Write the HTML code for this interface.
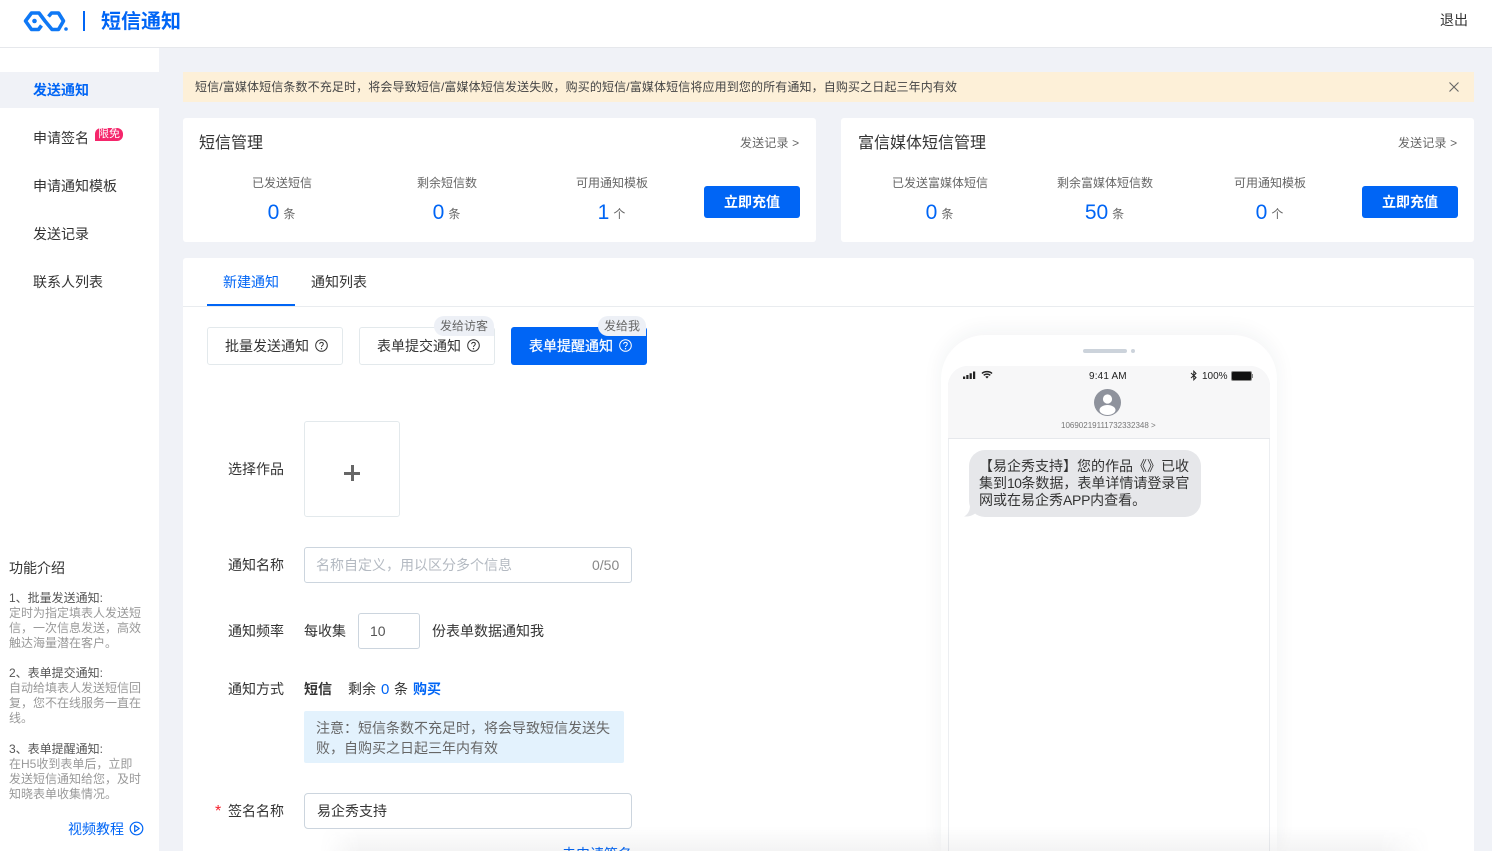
<!DOCTYPE html>
<html lang="zh"><head><meta charset="utf-8"><title>短信通知</title>
<style>
html,body{margin:0;padding:0;width:1492px;height:851px;overflow:hidden}
#w{position:relative;width:1492px;height:851px;overflow:hidden;background:#f0f2f7;font-family:"Liberation Sans","Noto Sans CJK SC",sans-serif;color:#333}
.a{position:absolute;white-space:nowrap;line-height:1.2}
.card{position:absolute;background:#fff;border-radius:3px}
.f{font-size:14px;color:#333}
.b{color:#0065f5}
.lab{color:#666;font-size:12px;transform:translateX(-50%)}
.num{transform:translateX(-50%);color:#666;font-size:12px;line-height:24px}
.num b{font-weight:400;font-size:21px;color:#0065f5;margin-right:4px;vertical-align:-1px}
.btn{position:absolute;background:#0065f5;color:#fff;border-radius:3px;text-align:center;font-weight:700}
.o{position:absolute;box-sizing:border-box;border:1px solid #e3e9ec;border-radius:3px;background:#fff}
.tag{position:absolute;background:#edf0f6;color:#666;font-size:12px;line-height:20px;height:20px;border-radius:10px 10px 0 10px;text-align:center}
.s{font-size:12px;line-height:14.7px;width:136px;white-space:normal;left:9px;color:#999}
.s i{font-style:normal;color:#555;display:block;margin-bottom:.6px}
</style></head><body><div id="w">
<div style="position:absolute;left:0;top:0;width:1492px;height:47px;background:#fff;border-bottom:1px solid #e6e8ec"></div>
<svg style="position:absolute;left:23px;top:10px" width="46" height="22" viewBox="0 0 46 22"><path d="M25.500 6.500L28.500 3H35.500L40.500 11L35.500 19.500H29L22 11L16 3H8.500L2.500 11L8.500 19.500H15.500L18.500 15.500" fill="none" stroke="#0f78f5" stroke-width="3.600" stroke-linejoin="round"/><circle cx="11.500" cy="11" r="2.300" fill="#0f78f5"/><circle cx="43" cy="19" r="1.800" fill="#0f78f5"/></svg>
<div style="position:absolute;left:83px;top:11px;width:2px;height:20px;background:#0065f5"></div>
<div class="a b" style="left:101px;top:11px;font-size:20px;font-weight:700;line-height:23px">短信通知</div>
<div class="a" style="left:1440px;top:12px;font-size:14px;line-height:17px">退出</div>

<div style="position:absolute;left:0;top:48px;width:159px;height:803px;background:#fff"></div>
<div style="position:absolute;left:0;top:72px;width:159px;height:36px;background:#f0f2f7"></div>
<div class="a b" style="left:33px;top:82px;font-size:14px;font-weight:700;line-height:17px">发送通知</div>
<div class="a" style="left:33px;top:130px;font-size:14px;line-height:17px">申请签名</div>
<div class="a" style="left:95px;top:128px;width:28px;height:13px;background:#f5266b;color:#fff;font-size:11px;line-height:13px;text-align:center;border-radius:6px 6px 6px 0">限免</div>
<div class="a" style="left:33px;top:178px;font-size:14px;line-height:17px">申请通知模板</div>
<div class="a" style="left:33px;top:226px;font-size:14px;line-height:17px">发送记录</div>
<div class="a" style="left:33px;top:274px;font-size:14px;line-height:17px">联系人列表</div>

<div class="a" style="left:9px;top:560px;font-size:14px;line-height:17px">功能介绍</div>
<div class="a s" style="top:591px"><i>1、批量发送通知:</i>定时为指定填表人发送短信，一次信息发送，高效触达海量潜在客户。</div>
<div class="a s" style="top:666px"><i>2、表单提交通知:</i>自动给填表人发送短信回复，您不在线服务一直在线。</div>
<div class="a s" style="top:742px"><i>3、表单提醒通知:</i>在H5收到表单后，立即<br>发送短信通知给您，及时<br>知晓表单收集情况。</div>
<div class="a b" style="left:68px;top:821px;font-size:14px;line-height:17px">视频教程</div>
<svg style="position:absolute;left:129px;top:821px" width="15" height="15" viewBox="0 0 15 15"><circle cx="7.500" cy="7.500" r="6.300" fill="none" stroke="#0065f5" stroke-width="1.200"/><path d="M5.700 4.400L10.200 7.500L5.700 10.600Z" fill="none" stroke="#0065f5" stroke-width="1.200" stroke-linejoin="round"/></svg>

<div style="position:absolute;left:183px;top:72px;width:1291px;height:30px;background:#fdf0d8"></div>
<div class="a" style="left:195px;top:80px;font-size:12px;line-height:15px;color:#444;letter-spacing:.125px">短信/富媒体短信条数不充足时，将会导致短信/富媒体短信发送失败，购买的短信/富媒体短信将应用到您的所有通知，自购买之日起三年内有效</div>
<svg style="position:absolute;left:1449px;top:82px" width="10" height="10" viewBox="0 0 10 10"><path d="M.5.500L9.500 9.500M9.500.500L.5 9.500" stroke="#666" stroke-width="1.100"/></svg>

<div class="card" style="left:183px;top:118px;width:633px;height:124px"></div>
<div class="a" style="left:199px;top:134px;font-size:16px;line-height:19px">短信管理</div>
<div class="a" style="left:740px;top:136px;font-size:12px;line-height:15px;color:#666;letter-spacing:.15px">发送记录 &gt;</div>
<div class="a lab" style="left:282px;top:176px">已发送短信</div>
<div class="a lab" style="left:447px;top:176px">剩余短信数</div>
<div class="a lab" style="left:612px;top:176px">可用通知模板</div>
<div class="a num" style="left:281.500px;top:201px"><b>0</b>条</div>
<div class="a num" style="left:446.500px;top:201px"><b>0</b>条</div>
<div class="a num" style="left:611.500px;top:201px"><b>1</b>个</div>
<div class="btn" style="left:704px;top:186px;width:96px;height:32px;line-height:32px;font-size:14px">立即充值</div>

<div class="card" style="left:841px;top:118px;width:633px;height:124px"></div>
<div class="a" style="left:858px;top:134px;font-size:16px;line-height:19px">富信媒体短信管理</div>
<div class="a" style="left:1398px;top:136px;font-size:12px;line-height:15px;color:#666;letter-spacing:.15px">发送记录 &gt;</div>
<div class="a lab" style="left:940px;top:176px">已发送富媒体短信</div>
<div class="a lab" style="left:1105px;top:176px">剩余富媒体短信数</div>
<div class="a lab" style="left:1270px;top:176px">可用通知模板</div>
<div class="a num" style="left:939.500px;top:201px"><b>0</b>条</div>
<div class="a num" style="left:1104.500px;top:201px"><b>50</b>条</div>
<div class="a num" style="left:1269.500px;top:201px"><b>0</b>个</div>
<div class="btn" style="left:1362px;top:186px;width:96px;height:32px;line-height:32px;font-size:14px">立即充值</div>

<div class="card" style="left:183px;top:258px;width:1291px;height:593px;border-radius:3px 3px 0 0"></div>
<div style="position:absolute;left:183px;top:306px;width:1291px;height:1px;background:#e9ecef"></div>
<div style="position:absolute;left:207px;top:304px;width:88px;height:2px;background:#0065f5"></div>
<div class="a b" style="left:223px;top:274px;font-size:14px;line-height:17px">新建通知</div>
<div class="a" style="left:311px;top:274px;font-size:14px;line-height:17px">通知列表</div>

<div class="o" style="left:207px;top:327px;width:136px;height:38px"></div>
<div class="a" style="left:225px;top:338px;font-size:14px;line-height:17px">批量发送通知</div>
<svg style="position:absolute;left:315px;top:339px" width="13" height="13" viewBox="0 0 13 13"><circle cx="6.500" cy="6.500" r="5.800" fill="none" stroke="#333"/><path d="M4.700 5.100C4.700 2.800 8.300 2.900 8.300 5C8.300 6.400 6.500 6.300 6.500 8" fill="none" stroke="#333"/><circle cx="6.500" cy="9.700" r=".7" fill="#333"/></svg>
<div class="o" style="left:359px;top:327px;width:136px;height:38px"></div>
<div class="a" style="left:377px;top:338px;font-size:14px;line-height:17px">表单提交通知</div>
<svg style="position:absolute;left:467px;top:339px" width="13" height="13" viewBox="0 0 13 13"><circle cx="6.500" cy="6.500" r="5.800" fill="none" stroke="#333"/><path d="M4.700 5.100C4.700 2.800 8.300 2.900 8.300 5C8.300 6.400 6.500 6.300 6.500 8" fill="none" stroke="#333"/><circle cx="6.500" cy="9.700" r=".7" fill="#333"/></svg>
<div class="tag" style="left:434px;top:316px;width:60px">发给访客</div>
<div style="position:absolute;left:511px;top:327px;width:136px;height:38px;background:#0065f5;border-radius:3px"></div>
<div class="a" style="left:529px;top:338px;font-size:14px;line-height:17px;color:#fff;-webkit-text-stroke:.25px #fff">表单提醒通知</div>
<svg style="position:absolute;left:619px;top:339px" width="13" height="13" viewBox="0 0 13 13"><circle cx="6.500" cy="6.500" r="5.800" fill="none" stroke="#fff"/><path d="M4.700 5.100C4.700 2.800 8.300 2.900 8.300 5C8.300 6.400 6.500 6.300 6.500 8" fill="none" stroke="#fff"/><circle cx="6.500" cy="9.700" r=".7" fill="#fff"/></svg>
<div class="tag" style="left:598px;top:316px;width:48px">发给我</div>

<div class="a f" style="left:228px;top:461px;line-height:17px">选择作品</div>
<div class="o" style="left:304px;top:421px;width:96px;height:96px"></div>
<div style="position:absolute;left:344px;top:472px;width:16px;height:3px;background:#666"></div>
<div style="position:absolute;left:350.500px;top:465px;width:3px;height:16px;background:#666"></div>

<div class="a f" style="left:228px;top:557px;line-height:17px">通知名称</div>
<div class="o" style="left:304px;top:547px;width:328px;height:36px;border-color:#ccd5de"></div>
<div class="a" style="left:316px;top:557px;font-size:14px;line-height:17px;color:#b4bac2">名称自定义，用以区分多个信息</div>
<div class="a" style="left:592px;top:558px;font-size:14px;line-height:15px;color:#888">0/50</div>

<div class="a f" style="left:228px;top:623px;line-height:17px">通知频率</div>
<div class="a f" style="left:304px;top:623px;line-height:17px">每收集</div>
<div class="o" style="left:358px;top:613px;width:62px;height:36px;border-color:#ccd5de"></div>
<div class="a" style="left:370px;top:624px;font-size:14px;line-height:15px;color:#555">10</div>
<div class="a f" style="left:432px;top:623px;line-height:17px">份表单数据通知我</div>

<div class="a f" style="left:228px;top:681px;line-height:17px">通知方式</div>
<div class="a f" style="left:304px;top:681px;line-height:17px;font-weight:700">短信</div>
<div class="a f" style="left:348px;top:681px;line-height:17px">剩余</div>
<div class="a f b" style="left:381px;top:681px;line-height:17px;font-size:15px">0</div>
<div class="a f" style="left:394px;top:681px;line-height:17px">条</div>
<div class="a f b" style="left:413px;top:681px;line-height:17px;font-weight:700">购买</div>
<div style="position:absolute;left:304px;top:711px;width:320px;height:52px;background:#e3f2fd;border-radius:2px"></div>
<div class="a" style="left:316px;top:718px;width:300px;white-space:normal;font-size:14px;line-height:20px;color:#666">注意：短信条数不充足时，将会导致短信发送失败，自购买之日起三年内有效</div>

<div class="a" style="left:215px;top:803px;font-size:16px;line-height:17px;color:#f5222d">*</div>
<div class="a f" style="left:228px;top:803px;line-height:17px">签名名称</div>
<div class="o" style="left:304px;top:793px;width:328px;height:36px;border-color:#ccd5de;border-radius:4px"></div>
<div class="a f" style="left:317px;top:803px;line-height:17px">易企秀支持</div>
<div class="a b" style="left:562px;top:846px;font-size:14px;line-height:5px;height:5px;overflow:hidden;padding-top:0"><span style="display:block;line-height:17px;margin-top:0">去申请签名</span></div>

<div style="position:absolute;left:941px;top:335px;width:336px;height:516px;background:#fff;border-radius:44px 44px 0 0;box-shadow:0 -4px 20px rgba(40,50,70,.06)"></div>
<div style="position:absolute;left:1083px;top:349px;width:44px;height:4px;background:#ccd3db;border-radius:2px"></div>
<div style="position:absolute;left:1131px;top:349px;width:4px;height:4px;background:#ccd3db;border-radius:2px"></div>
<div style="position:absolute;box-sizing:border-box;left:948px;top:366px;width:322px;height:485px;border:1px solid #eceef1;border-bottom:0;border-radius:20px 20px 0 0"></div>
<div style="position:absolute;box-sizing:border-box;left:948px;top:366px;width:322px;height:73px;background:#f7f7f8;border-bottom:1px solid #e6e8ec;border-radius:20px 20px 0 0"></div>
<svg style="position:absolute;left:962px;top:370px" width="32" height="10" viewBox="0 0 32 10"><path d="M1 6.500h2.200v2.500H1zM4.300 5h2.200v4H4.300zM7.600 3.300h2.200V9H7.600zM11 1.500h2.200V9H11z" fill="#222"/><path d="M20 3.500C22.500 1 27.500 1 30 3.500M21.700 5.300C23.500 3.700 26.500 3.700 28.300 5.300" fill="none" stroke="#222" stroke-width="1.500"/><path d="M23.300 6.700L25 8.500L26.700 6.700C25.700 5.900 24.300 5.900 23.300 6.700Z" fill="#222"/></svg>
<div class="a" style="left:1089px;top:371px;font-size:10px;line-height:12px;color:#222;letter-spacing:.15px">9:41 AM</div>
<svg style="position:absolute;left:1190px;top:370px" width="8" height="11" viewBox="0 0 8 11"><path d="M1 3L6 7.500L3.800 9.800V1.200L6 3.500L1 8" fill="none" stroke="#222"/></svg>
<div class="a" style="left:1202px;top:371px;font-size:10px;line-height:12px;color:#222">100%</div>
<div style="position:absolute;box-sizing:border-box;left:1231px;top:371px;width:21px;height:10px;border:1px solid #888;border-radius:2px;background:#111"></div>
<div style="position:absolute;left:1252px;top:374px;width:1px;height:4px;background:#888"></div>
<svg style="position:absolute;left:1094px;top:389px" width="27" height="27" viewBox="0 0 27 27"><defs><clipPath id="c"><circle cx="13.500" cy="13.500" r="13.500"/></clipPath></defs><circle cx="13.500" cy="13.500" r="13.500" fill="#8e929c"/><circle cx="13.500" cy="10" r="4.600" fill="#fff"/><ellipse cx="13.500" cy="21" rx="8" ry="5" fill="#fff" clip-path="url(#c)"/></svg>
<div class="a" style="left:1061px;top:421px;font-size:8px;line-height:10px;color:#777">10690219111732332348 &gt;</div>
<svg style="position:absolute;left:964px;top:505px" width="14" height="12" viewBox="0 0 14 12"><path d="M6 0C6 5 4.500 9 0 11.500C4 11.800 8 11 12 8Z" fill="#e6e7ea"/></svg>
<div class="a" style="left:969px;top:450px;width:232px;height:67px;background:#e6e7ea;border-radius:16px"></div>
<div class="a" style="left:979px;top:458px;width:212px;white-space:normal;font-size:14px;line-height:17px;color:#333">【易企秀支持】您的作品《》已收<br>集到<span style="letter-spacing:-.6px">10</span>条数据，表单详情请登录官<br>网或在易企秀<span style="letter-spacing:-.3px">APP</span>内查看。</div>

<div style="position:absolute;left:320px;top:826px;width:1110px;height:25px;background:linear-gradient(to bottom,rgba(60,60,70,0),rgba(60,60,70,.06));-webkit-mask-image:linear-gradient(to right,transparent,#000 40px,#000 1060px,transparent)"></div>
</div></body></html>
